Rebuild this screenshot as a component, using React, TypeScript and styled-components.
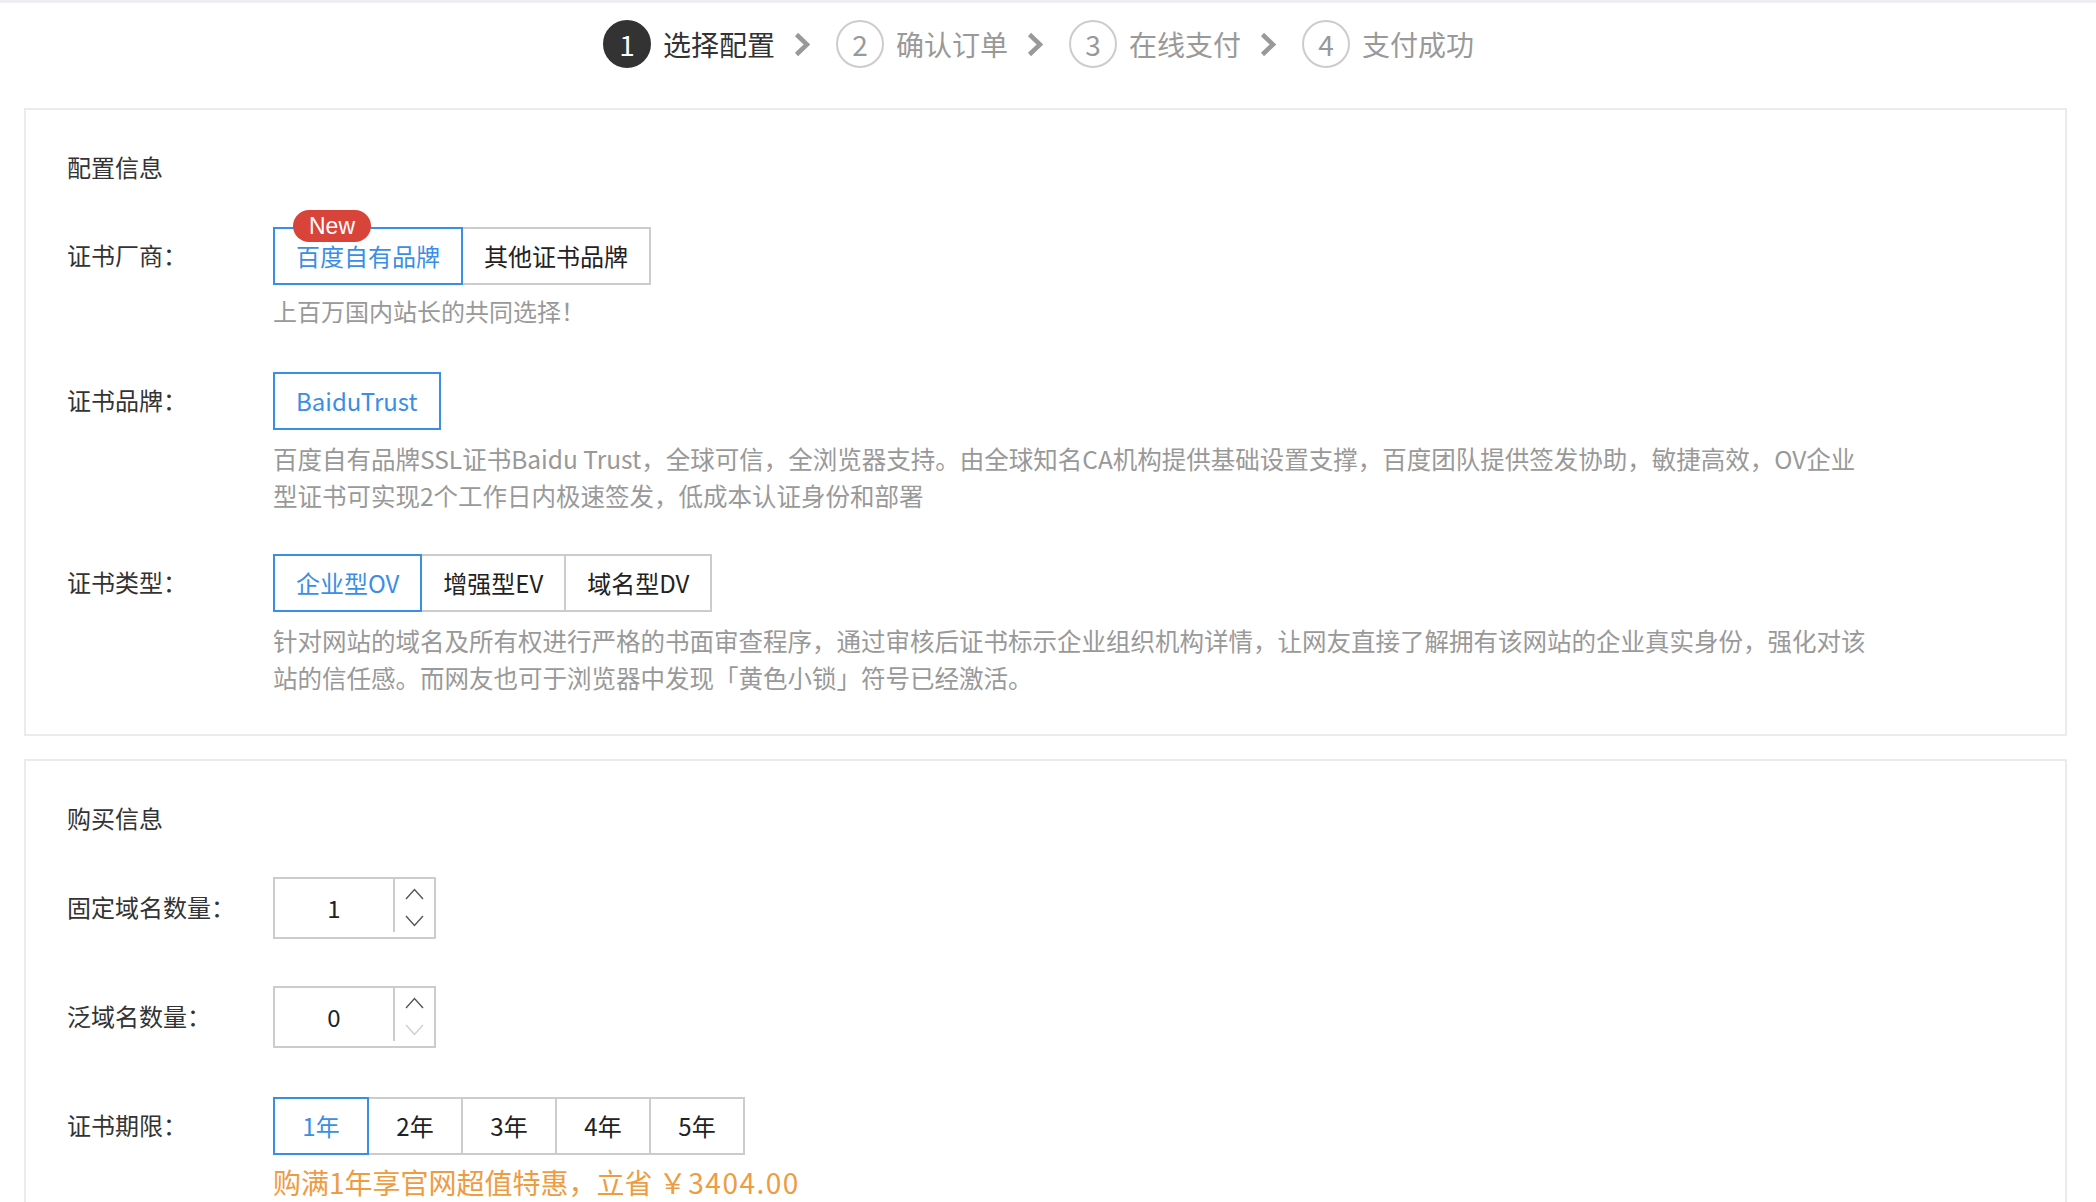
import styled, { createGlobalStyle } from "styled-components";

const colors = {
  blue: "#3a8ee6",
  text: "#333333",
  dark: "#222222",
  muted: "#999999",
  line: "#cccccc",
  panelLine: "#ebebeb",
  red: "#d9443a",
  orange: "#ef9b41",
};

const GlobalStyle = createGlobalStyle`
  html, body {
    margin: 0;
    padding: 0;
    background: #ffffff;
  }
  body {
    font-family: "Noto Sans CJK SC", "Noto Sans", sans-serif;
    color: ${colors.text};
  }
  * {
    box-sizing: border-box;
  }
`;

const steps = ["选择配置", "确认订单", "在线支付", "支付成功"];

const ChevronIcon = () => (
  <svg width="16" height="25" viewBox="0 0 16 25">
    <polyline
      points="2.5,2.5 13,12.5 2.5,22.5"
      fill="none"
      stroke="#999999"
      strokeWidth="4.5"
      strokeLinejoin="miter"
    />
  </svg>
);

const Arrow: React.FC<{ up?: boolean; disabled?: boolean }> = ({
  up,
  disabled,
}) => (
  <svg width="19" height="12" viewBox="0 0 19 12">
    <polyline
      points={up ? "1,11 9.5,1.5 18,11" : "1,1 9.5,10.5 18,1"}
      fill="none"
      stroke={disabled ? "#cfcfcf" : "#555555"}
      strokeWidth="1.4"
    />
  </svg>
);

type NumberFieldProps = { value: number; min?: number };
const NumberField: React.FC<NumberFieldProps> = ({ value, min = 0 }) => (
  <NumberBox>
    <NumberValue>{value}</NumberValue>
    <SpinColumn>
      <Arrow up />
      <Arrow disabled={value <= min} />
    </SpinColumn>
  </NumberBox>
);

export default function App() {
  return (
    <Page>
      <GlobalStyle />
      <StepsBar>
        {steps.map((s, i) => (
          <StepItem key={s}>
            <StepCircle $active={i === 0}>{i + 1}</StepCircle>
            <StepText $active={i === 0}>{s}</StepText>
            {i < steps.length - 1 && (
              <ChevronWrap>
                <ChevronIcon />
              </ChevronWrap>
            )}
          </StepItem>
        ))}
      </StepsBar>

      <Panel>
        <PanelTitle>配置信息</PanelTitle>

        <FormRow $gap={42}>
          <Label $h={58}>证书厂商：</Label>
          <Field>
            <OptionGroup>
              <OptionButton $selected>
                百度自有品牌
                <NewBadge>New</NewBadge>
              </OptionButton>
              <OptionButton>其他证书品牌</OptionButton>
            </OptionGroup>
            <Hint>上百万国内站长的共同选择！</Hint>
          </Field>
        </FormRow>

        <FormRow $gap={43}>
          <Label $h={58}>证书品牌：</Label>
          <Field>
            <OptionGroup>
              <OptionButton $selected>BaiduTrust</OptionButton>
            </OptionGroup>
            <Desc>
              百度自有品牌SSL证书Baidu
              Trust，全球可信，全浏览器支持。由全球知名CA机构提供基础设置支撑，百度团队提供签发协助，敏捷高效，OV企业型证书可实现2个工作日内极速签发，低成本认证身份和部署
            </Desc>
          </Field>
        </FormRow>

        <FormRow $gap={40}>
          <Label $h={58}>证书类型：</Label>
          <Field>
            <OptionGroup>
              <OptionButton $selected>企业型OV</OptionButton>
              <OptionButton>增强型EV</OptionButton>
              <OptionButton>域名型DV</OptionButton>
            </OptionGroup>
            <Desc>
              针对网站的域名及所有权进行严格的书面审查程序，通过审核后证书标示企业组织机构详情，让网友直接了解拥有该网站的企业真实身份，强化对该站的信任感。而网友也可于浏览器中发现「黄色小锁」符号已经激活。
            </Desc>
          </Field>
        </FormRow>
      </Panel>

      <Panel $mt={23}>
        <PanelTitle>购买信息</PanelTitle>

        <FormRow $gap={41}>
          <Label $h={62}>固定域名数量：</Label>
          <Field>
            <NumberField value={1} min={0} />
          </Field>
        </FormRow>

        <FormRow $gap={47}>
          <Label $h={62}>泛域名数量：</Label>
          <Field>
            <NumberField value={0} min={0} />
          </Field>
        </FormRow>

        <FormRow $gap={49}>
          <Label $h={58}>证书期限：</Label>
          <Field>
            <OptionGroup>
              {[1, 2, 3, 4, 5].map((y) => (
                <PeriodButton key={y} $selected={y === 1}>
                  {y}年
                </PeriodButton>
              ))}
            </OptionGroup>
            <Promo>
              购满1年享官网超值特惠，立省 <Price>￥3404.00</Price>
            </Promo>
          </Field>
        </FormRow>
      </Panel>
    </Page>
  );
}

const Page = styled.div`
  height: 1202px;
  overflow: hidden;
  border-top: 3px solid #eceef1;
`;

const StepsBar = styled.div`
  display: flex;
  justify-content: center;
  align-items: center;
  margin: 0 29px 0 24px;
  padding: 17px 14px 40px 0;
`;

const StepItem = styled.div`
  display: flex;
  align-items: center;
`;

const StepCircle = styled.div<{ $active?: boolean }>`
  width: 48px;
  height: 48px;
  border-radius: 50%;
  display: flex;
  align-items: center;
  justify-content: center;
  font-size: 28px;
  line-height: 1;
  border: 2px solid ${(p) => (p.$active ? "#333333" : "#cccccc")};
  background: ${(p) => (p.$active ? "#333333" : "#ffffff")};
  color: ${(p) => (p.$active ? "#ffffff" : colors.muted)};
`;

const StepText = styled.span<{ $active?: boolean }>`
  margin-left: 12px;
  font-size: 28px;
  line-height: 48px;
  color: ${(p) => (p.$active ? colors.text : colors.muted)};
`;

const ChevronWrap = styled.span`
  display: flex;
  margin: 0 26px 0 19px;
`;

const Panel = styled.section<{ $mt?: number }>`
  margin: ${(p) => p.$mt ?? 0}px 29px 0 24px;
  border: 2px solid ${colors.panelLine};
  background: #ffffff;
  padding: 39px 41px 38px;
`;

const PanelTitle = styled.h2`
  margin: 0;
  font-size: 24px;
  font-weight: 400;
  line-height: 36px;
  color: ${colors.text};
`;

const FormRow = styled.div<{ $gap: number }>`
  display: grid;
  grid-template-columns: 206px 1fr;
  margin-top: ${(p) => p.$gap}px;
`;

const Label = styled.div<{ $h: number }>`
  height: ${(p) => p.$h}px;
  padding-bottom: 4px;
  display: flex;
  align-items: center;
  font-size: 24px;
  color: ${colors.text};
  white-space: nowrap;
`;

const Field = styled.div`
  display: flex;
  flex-direction: column;
  align-items: flex-start;
`;

const OptionGroup = styled.div`
  display: flex;
`;

const OptionButton = styled.div<{ $selected?: boolean }>`
  position: relative;
  height: 58px;
  padding: 0 21px 2px;
  display: flex;
  align-items: center;
  justify-content: center;
  font-size: 24px;
  white-space: nowrap;
  background: #ffffff;
  border: 2px solid ${(p) => (p.$selected ? colors.blue : colors.line)};
  color: ${(p) => (p.$selected ? colors.blue : colors.dark)};
  z-index: ${(p) => (p.$selected ? 1 : 0)};
  cursor: pointer;

  & + & {
    margin-left: -2px;
  }
`;

const PeriodButton = styled(OptionButton)`
  width: 96px;
  padding: 0 0 2px;
`;

const NewBadge = styled.span`
  position: absolute;
  top: -19px;
  left: 18px;
  width: 78px;
  height: 32px;
  border-radius: 16px;
  background: ${colors.red};
  color: #ffffff;
  font-family: "Liberation Sans", "Noto Sans", sans-serif;
  font-size: 23px;
  line-height: 32px;
  text-align: center;
`;

const Hint = styled.div`
  margin-top: 7px;
  font-size: 24px;
  line-height: 37px;
  color: ${colors.muted};
`;

const Desc = styled.div`
  margin-top: 10px;
  max-width: 1606px;
  font-size: 24.5px;
  line-height: 37px;
  color: ${colors.muted};
`;

const Promo = styled.div`
  margin-top: 6px;
  font-size: 28px;
  line-height: 42px;
  color: ${colors.orange};
  white-space: nowrap;
`;

const Price = styled.span`
  letter-spacing: 1.5px;
`;

const NumberBox = styled.div`
  width: 163px;
  height: 62px;
  border: 2px solid ${colors.line};
  display: flex;
  background: #ffffff;
`;

const NumberValue = styled.div`
  width: 118px;
  display: flex;
  align-items: center;
  justify-content: center;
  padding-bottom: 2px;
  font-size: 24px;
  color: ${colors.dark};
`;

const SpinColumn = styled.div`
  flex: 1;
  height: calc(100% - 5px);
  border-left: 2px solid ${colors.line};
  display: flex;
  flex-direction: column;
  align-items: center;
  justify-content: center;
  gap: 15px;
  padding-top: 4px;
`;
